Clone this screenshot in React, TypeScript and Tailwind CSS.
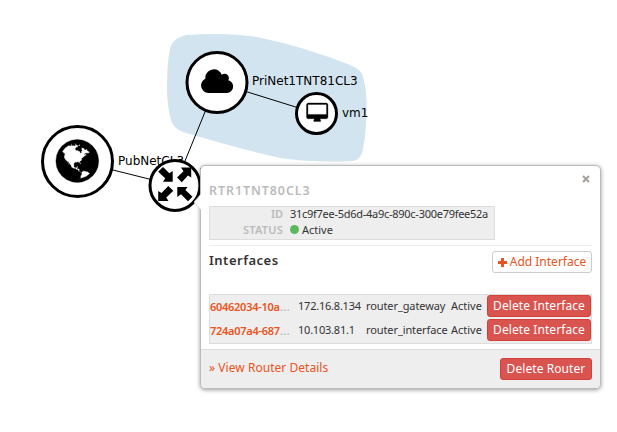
import type { ReactNode } from 'react';

const GLOBE =
  'M896 128q209 0 385.5 103t279.5 279.5 103 385.5-103 385.5-279.5 279.5-385.5 103-385.5-103-279.5-279.5-103-385.5 103-385.5 279.5-279.5 385.5-103zm274 521q-2 1-9.5 9.5t-13.5 9.5q2 0 4.5-5t5-11 3.5-7q6-7 22-15 14-6 52-12 34-8 51 11-2-2 9.5-13t14.5-12q3-2 15-4.5t15-7.5l2-22q-12 1-17.5-7t-6.5-21q0 2-6 8 0-7-4.5-8t-11.5 1-9 1q-10-3-15-7.5t-8-16.5-4-15q-2-5-9.5-11t-9.5-10q-1-2-2.5-5.5t-3-6.5-4-5.5-5.5-2.5-7 5-7.5 10-4.5 5q-3-2-6-1.5t-4.5 1-4.500 3-5 3.500q-3 2-8.500 3t-8.500 2q15-5-1-11-10-4-16-3 9-4 7.500-12t-8.500-14h5q-1-4-8.500-8.500t-17.500-8.500-13-6q-8-5-34-9.500t-33-.5q-5 6-4.500 10.500t4 14 3.500 12.500q1 6-5.500 13t-6.500 12q0 7 14 15.500t10 21.500q-3 8-16 16t-16 12q-5 8-1.500 18.500t10.500 16.500q2 2 1.500 4t-3.500 4.500-5.500 4-6.500 3.500l-3 2q-11 5-20.500-6t-13.500-26q-7-25-16-30-23-8-29 1-5-13-41-26-25-9-58-4 6-1 0-15-7-15-19-12 3-6 4-17.500t1-13.500q3-13 12-23 1-1 7-8.500t9.500-13.500.5-6q35 4 50-11 5-5 11.500-17t10.500-17q9-6 14-5.500t14.500 5.500 14.500 5q14 1 15.500-11t-7.500-20q12 1 3-17-4-7-8-9-12-4-27 5-8 4 2 8-1-1-9.500 10.500t-16.500 17.500-16-5q-1-1-5.500-13.500t-9.500-13.500q-8 0-16 15 3-8-11-15t-24-8q19-12-8-27-7-4-20.500-5t-19.500 4q-5 7-5.500 11.500t5 8 10.500 5.500 11.500 4 8.500 3q14 10 8 14-2 1-8.500 3.500t-11.500 4.500-6 4q-3 4 0 14t-2 14q-5-5-9-17.500t-7-16.500q7 9-25 6l-10-1q-4 0-16 2t-20.500 1-13.500-8q-4-8 0-20 1-4 4-2-4-3-11-9.500t-10-8.500q-46 15-94 41 6 1 12-1 5-2 13-6.500t10-5.500q34-14 42-7l5-5q14 16 20 25-7-4-30-1-20 6-22 12 7 12 5 18-4-3-11.500-10t-14.500-11-15-5q-16 0-22 1-146 80-235 222 7 7 12 8 4 1 5 9t2.500 11 11.500-3q9 8 3 19 1-1 44 27 19 17 21 21 3 11-10 18-1-2-9-9t-9-4q-3 5 .5 18.500t10.500 12.500q-7 0-9.500 16t-2.500 35.500-1 23.500l2 1q-3 12 5.500 34.500t21.500 19.500q-13 3 20 43 6 8 8 9 3 2 12 7.500t15 10 10 10.500q4 5 10 22.500t14 23.500q-2 6 9.500 20t10.500 23q-1 0-2.500 1t-2.500 1q3 7 15.500 14t15.500 13q1 3 2 10t3 11 8 2q2-20-24-62-15-25-17-29-3-5-5.500-15.500t-4.500-14.500q2 0 6 1.500t8.500 3.500 7.500 4 2 3q-3 7 2 17.500t12 18.500 17 19 12 13q6 6 14 19.500t0 13.500q9 0 20 10.500t17 19.500q5 8 8 26t5 24q2 7 8.500 13.500t12.500 9.500l16 8 13 7q5 2 18.500 10.500t21.500 11.500q10 4 16 4t14.500-2.500 13.500-3.500q15-2 29 15t21 21q36 19 55 11-2 1 .5 7.500t8 15.500 9 14.500 5.500 8.500q5 6 18 15t18 15q6-4 7-9-3 8 7 20t18 10q14-3 14-32-31 15-49-18 0-1-2.500-5.500t-4-8.500-2.500-8.500 0-7.500 5-3q9 0 10-3.500t-2-12.500-4-13q-1-8-11-20t-12-15q-5 9-16 8t-16-9q0 1-1.500 5.500t-1.500 6.500q-13 0-15-1 1-3 2.500-17.500t3.500-22.500q1-4 5.500-12t7.500-14.500 4-12.500-4.500-9.500-17.500-2.500q-19 1-26 20-1 3-3 10.500t-5 11.500-9 7q-7 3-24 2t-24-5q-13-8-22.500-29t-9.500-37q0-10 2.500-26.500t3-25-5.500-24.500q3-2 9-9.500t10-10.500q2-1 4.500-1.500t4.500 0 4-1.500 3-6q-1-1-4-3-3-3-4-3 7 3 28.500-1.500t27.500 1.500q15 11 22-2 0-1-2.500-9.500t-.5-13.500q5 27 29 9 3 3 15.500 5t17.500 5q3 2 7 5.500t5.500 4.500 5-.5 8.500-6.500q10 14 12 24 11 40 19 44 7 3 11 2t4.500-9.500 0-14-1.500-12.500l-1-8v-18l-1-8q-15-3-18.500-12t1.500-18.500 15-18.500q1-1 8-3.500t15.500-6.500 12.500-8q21-19 15-35 7 0 11-9-1 0-5-3t-7.500-5-4.500-2q9-5 2-16 5-3 7.500-11t7.500-10q9 12 21 2 7-8 1-16 5-7 20.500-10.500t18.500-9.500q7 2 8-2t1-12 3-12q4-5 15-9t13-5l17-11q3-4 0-4 18 2 31-11 10-11-6-20 3-6-3-9.500t-15-5.500q3-1 11.500-.5t10.500-1.500q15-10-7-16-17-5-43 12zm-163 877q206-36 351-189-3-3-12.500-4.500t-12.500-3.500q-18-7-24-8 1-7-2.500-13t-8-9-12.500-8-11-7q-2-2-7-6t-7-5.500-7.500-4.500-8.500-2-10 1l-3 1q-3 1-5.500 2.500t-5.500 3-4 3 0 2.500q-21-17-36-22-5-1-11-5.500t-10.500-7-10-1.500-11.500 7q-5 5-6 15t-2 13q-7-5 0-17.500t2-18.500q-3-6-10.500-4.500t-12 4.500-11.500 8.500-9 6.500-8.500 5.500-8.500 7.500q-3 4-6 12t-5 11q-2-4-11.500-6.500t-9.500-5.500q2 10 4 35t5 38q7 31-12 48-27 25-29 40-4 22 12 26 0 7-8 20.500t-7 21.500q0 6 2 16z';
const CLOUD =
  'M1856 1152q0 159-112.5 271.5t-271.5 112.5h-1088q-185 0-316.5-131.5t-131.5-316.5q0-130 70-240t188-165q-2-30-2-43 0-212 150-362t362-150q156 0 285.5 87t188.5 231q71-62 166-62 106 0 181 75t75 181q0 76-41 138 130 31 213.5 135.5t83.5 238.5z';
const DESKTOP =
  'M1792 992v-832q0-13-9.5-22.5t-22.5-9.5h-1600q-13 0-22.5 9.5t-9.5 22.5v832q0 13 9.5 22.5t22.5 9.5h1600q13 0 22.5-9.5t9.5-22.5zm128-832v1088q0 66-47 113t-113 47h-544q0 37 16 77.5t32 71 16 43.5q0 26-19 45t-45 19h-512q-26 0-45-19t-19-45q0-14 16-44t32-70 16-78h-544q-66 0-113-47t-47-113v-1088q0-66 47-113t113-47h1600q66 0 113 47t47 113z';

function Topology() {
  return (
    <svg
      width="617"
      height="432"
      viewBox="0 0 617 432"
      className="block font-['DejaVu_Sans',sans-serif] text-[12px]"
    >
      <path
        d="M167 87Q167 62 170 49Q173 37 187 35Q225 32 257 37Q305 47 350 65Q362 70 363 77Q367 90 366.500 112Q366 135 363 149Q361 160 353 161Q315 163 280 158Q240 149 183 132Q173 128 171 120Q167 106 167 87Z"
        fill="#d2e4f0"
      />
      <g stroke="#000" strokeWidth="1">
        <path d="M77 161L175 185.500M175 185.500L217 82.500M217 82.500L316.500 113.500" />
      </g>
      <g fill="#fff" stroke="#000" strokeWidth="3">
        <circle cx="77.500" cy="161.500" r="35" />
        <circle cx="217" cy="82.500" r="30" />
        <circle cx="316.500" cy="113.500" r="20" />
      </g>
      <path d={GLOBE} transform="translate(52.300 136) scale(.0279)" stroke="#000" strokeWidth="12" />
      <path d={CLOUD} transform="translate(202.100 67.200) scale(.01674)" />
      <path d={DESKTOP} transform="translate(306.500 103) scale(.01116)" stroke="#000" strokeWidth="30" />
      <text x="118" y="165">PubNetCL3</text>
      <text x="252" y="85">PriNet1TNT81CL3</text>
      <text x="342" y="117">vm1</text>
      <circle cx="175" cy="185.500" r="25" fill="#fff" stroke="#000" strokeWidth="3" />
      <path d="M158.200 171.700L163 167L169.300 173.200L172.700 171V181.800H163L165.200 178.300ZM191.200 167.500V177.500L188 175.500L181.800 182.200L177 177.600L183.500 171.200L181 167.500ZM158.200 200.900V190.900L161.500 193L168.300 186L173.300 190.700L166.300 197.500L168.500 200.900ZM177.300 187H187.500L185.400 190.100L192.500 196.800L188 201.300L181 194.300L177.300 197Z" />
      <path d="M200 168.500h3M200 238h3M200 244.500h3" stroke="#000" />
    </svg>
  );
}

function DangerButton({ children, className = '' }: { children: ReactNode; className?: string }) {
  return (
    <button
      className={`flex items-center justify-center rounded-[3px] border border-[#d43f3a] bg-[#d9534f] text-[12px] leading-none tracking-[0.08px] whitespace-nowrap text-white ${className}`}
    >
      {children}
    </button>
  );
}

const interfaces = [
  { id: '60462034-10a', ip: '172.16.8.134', type: 'router_gateway' },
  { id: '724a07a4-687', ip: '10.103.81.1', type: 'router_interface' },
];

export default function App() {
  return (
    <main className="relative h-[432px] w-[617px] overflow-hidden bg-white">
      <Topology />
      <section className="absolute top-[165px] left-[200px] flex h-[224px] w-[401px] flex-col rounded-[5px] border border-[#bbb] bg-white font-['Noto_Sans',sans-serif] text-[#333] shadow-[0_1px_4px_rgba(0,0,0,0.4)]">
        <svg className="absolute top-[26px] -left-[8px]" width="9" height="20" viewBox="0 0 9 20">
          <path d="M9 1L1 10L9 19Z" fill="#fff" />
          <path d="M8 2L1 10L8 18" fill="none" stroke="#ccc" strokeOpacity=".7" />
        </svg>
        <div className="flex h-[183px] flex-col px-2">
          <header className="flex h-10 items-start justify-between pt-[16px]">
            <h3 className="text-[12.5px] leading-[17px] font-semibold tracking-[0.9px] text-[#bbb]">RTR1TNT80CL3</h3>
            <svg className="-mt-[7px] mr-[2px]" width="8" height="8" viewBox="0 0 8 8">
              <path d="M1 1L7 7M7 1L1 7" stroke="#a3a09a" strokeWidth="2" />
            </svg>
          </header>
          <dl className="grid h-[34px] w-[286px] grid-cols-[73px_1fr] grid-rows-[13px_19px] items-center gap-x-[7px] border border-[#ddd] bg-[#eee] text-[11px] leading-none">
            <dt className="text-right font-semibold text-[#bbb]">ID</dt>
            <dd className="whitespace-nowrap tracking-[-0.27px]">31c9f7ee-5d6d-4a9c-890c-300e79fee52a</dd>
            <dt className="text-right font-semibold tracking-[0.2px] text-[#bbb]">STATUS</dt>
            <dd className="flex items-center gap-[3px]">
              <span className="size-[9px] rounded-full bg-[#5cb85c]" />
              Active
            </dd>
          </dl>
          <div className="mt-[5px] flex h-[49px] items-start justify-between border-t border-[#eee]">
            <h4 className="mt-[6px] text-[13px] leading-[17px] font-semibold tracking-[0.5px]">Interfaces</h4>
            <button className="mt-[5px] flex h-[22px] w-[100px] items-center justify-center gap-[3px] rounded-[3px] border border-[#ccc] bg-white pb-px text-[12px] leading-none whitespace-nowrap text-[#e95420]">
              <svg className="mt-px" width="9" height="9" viewBox="0 0 9 9">
                <path d="M4.500 0V9M0 4.500H9" stroke="currentColor" strokeWidth="3" />
              </svg>
              Add Interface
            </button>
          </div>
          <div className="flex h-[50px] w-[383px] flex-col gap-[2px] border border-[#ddd] bg-[#eee] text-[11px] leading-none">
            {interfaces.map((row) => (
              <div key={row.id} className="grid h-[22px] grid-cols-[88px_68px_85px_36px_104px] items-center whitespace-nowrap">
                <span className="flex items-center font-semibold tracking-[-0.27px] text-[#e95420]">
                  {row.id}
                  <span className="text-[13px] font-normal tracking-normal text-[#bbb]">…</span>
                </span>
                <span className="-mt-[2px] tracking-[-0.22px]">{row.ip}</span>
                <span className="-mt-[2px] tracking-[-0.1px]">{row.type}</span>
                <span className="-mt-[2px]">Active</span>
                <DangerButton className="h-[22px] w-[104px]">Delete Interface</DangerButton>
              </div>
            ))}
          </div>
        </div>
        <footer className="flex h-[39px] items-center justify-between rounded-b-[4px] border-t border-[#ddd] bg-[#eee] px-2">
          <a className="-mt-[2px] text-[12px] leading-none tracking-[0.04px] text-[#e95420]">» View Router Details</a>
          <DangerButton className="h-[22px] w-[92px]">Delete Router</DangerButton>
        </footer>
      </section>
    </main>
  );
}
